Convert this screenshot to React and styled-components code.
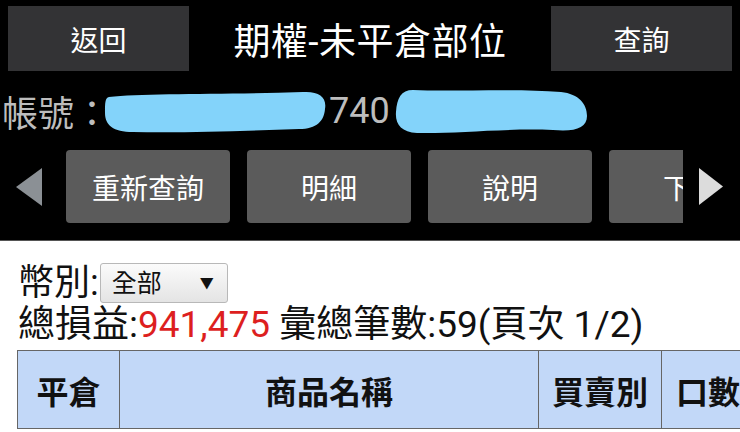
import React from 'react'
import styled, { createGlobalStyle } from 'styled-components'

const GlobalStyle = createGlobalStyle`
  html, body {
    margin: 0;
    padding: 0;
    background: #fff;
  }
  body {
    font-family: Roboto, "Noto Sans CJK TC", "Noto Sans", sans-serif;
    width: 740px;
    height: 432px;
    overflow: hidden;
  }
`

const Dark = styled.div`
  background: #000;
  padding-bottom: 17px;
  border-bottom: 1px solid #555;
`

const TopBar = styled.div`
  display: flex;
  align-items: center;
  padding: 6px 8px 0;
`

const BarButton = styled.div`
  width: 181px;
  height: 65px;
  background: #333335;
  color: #fff;
  font-size: 28px;
  display: flex;
  align-items: center;
  justify-content: center;
  flex-shrink: 0;
`

const Title = styled.div`
  flex: 1;
  text-align: center;
  color: #fff;
  font-size: 37px;
  letter-spacing: 0.5px;
`

const AccountRow = styled.div`
  display: flex;
  align-items: center;
  height: 79px;
  padding-left: 2px;
  color: #bdbdbd;
  font-size: 36px;
`

const Colon = styled.span`
  margin-right: -7px;
`

const AccountDigits = styled.span`
  margin: 0 3px 0 2px;
`

const Toolbar = styled.div`
  display: flex;
  align-items: center;
  height: 73px;
`

const Arrow = styled.svg`
  flex-shrink: 0;
  margin-left: 16px;
`

const Viewport = styled.div`
  width: 617px;
  margin-left: 24px;
  overflow: hidden;
  flex-shrink: 0;
`

const Track = styled.div`
  display: flex;
  gap: 17px;
`

const ToolButton = styled.div`
  width: 164px;
  height: 73px;
  flex-shrink: 0;
  background: #5b5b5b;
  border-radius: 4px;
  color: #fff;
  font-size: 28px;
  display: flex;
  align-items: center;
  justify-content: center;
`

const Content = styled.div`
  padding: 21px 0 0 17px;
  color: #111;
`

const Line = styled.div`
  display: flex;
  align-items: center;
  font-size: ${p => p.size}px;
  line-height: 42px;
  height: 42px;
  white-space: nowrap;
  padding-left: ${p => p.indent || 0}px;
`

const SelectBox = styled.div`
  width: 128px;
  height: 40px;
  margin-left: 1px;
  border: 1px solid #b8b8b8;
  border-radius: 3px;
  background: linear-gradient(#fbfbfb, #e4e4e4);
  display: flex;
  align-items: center;
  justify-content: space-between;
  padding: 0 13px 0 11px;
  box-sizing: border-box;
  font-size: 25px;
  line-height: 1;
  color: #111;
`

const Caret = styled.span`
  font-size: 14px;
`

const Red = styled.span`
  color: #dd1f1f;
`

const Table = styled.div`
  display: grid;
  grid-template-columns: 102px 419px 123px 120px;
  margin-top: 4px;
  border-top: 1px solid #666;
  border-left: 1px solid #666;
`

const HeadCell = styled.div`
  height: 77px;
  background: #c2d8f8;
  border-right: 1px solid #666;
  border-bottom: 1px solid #666;
  display: flex;
  align-items: center;
  justify-content: ${p => (p.left ? 'flex-start' : 'center')};
  padding-left: ${p => (p.left ? 14 : 0)}px;
  font-size: 32px;
  font-weight: 700;
  color: #111;
`

const Blob = ({ width, height, d }) => (
  <svg width={width} height={height} viewBox={`0 0 ${width} ${height}`}>
    <path d={d} fill="#83d3fa" />
  </svg>
)

export default function App() {
  return (
    <>
      <GlobalStyle />
      <Dark>
        <TopBar>
          <BarButton>返回</BarButton>
          <Title>期權-未平倉部位</Title>
          <BarButton>查詢</BarButton>
        </TopBar>
        <AccountRow>
          帳號<Colon>：</Colon>
          <Blob
            width={224}
            height={44}
            d="M6 8 C40 4 120 6 200 3 C216 2 224 8 222 20 C221 32 214 40 196 40 C140 42 80 44 30 43 C10 43 2 36 2 24 C2 14 2 9 6 8 Z"
          />
          <AccountDigits>740</AccountDigits>
          <Blob
            width={196}
            height={50}
            d="M20 4 C60 6 120 2 168 6 C186 8 194 18 194 30 C194 42 182 46 160 44 C110 42 60 48 24 47 C8 46 2 38 3 26 C4 12 8 4 20 4 Z"
          />
        </AccountRow>
        <Toolbar>
          <Arrow width="26" height="38" viewBox="0 0 26 38">
            <polygon points="26,0 26,38 0,19" fill="#8b9095" />
          </Arrow>
          <Viewport>
            <Track>
              <ToolButton>重新查詢</ToolButton>
              <ToolButton>明細</ToolButton>
              <ToolButton>說明</ToolButton>
              <ToolButton>下頁</ToolButton>
            </Track>
          </Viewport>
          <Arrow width="24" height="37" viewBox="0 0 24 37">
            <polygon points="0,0 24,18.5 0,37" fill="#dcdcdc" />
          </Arrow>
        </Toolbar>
      </Dark>
      <Content>
        <Line size={36} indent={1}>
          幣別:
          <SelectBox>
            全部
            <Caret>▼</Caret>
          </SelectBox>
        </Line>
        <Line size={37} indent={1}>
          總損益:<Red>941,475</Red>&nbsp;彙總筆數:59(頁次 1/2)
        </Line>
        <Table>
          <HeadCell>平倉</HeadCell>
          <HeadCell>商品名稱</HeadCell>
          <HeadCell>買賣別</HeadCell>
          <HeadCell left>口數</HeadCell>
        </Table>
      </Content>
    </>
  )
}
